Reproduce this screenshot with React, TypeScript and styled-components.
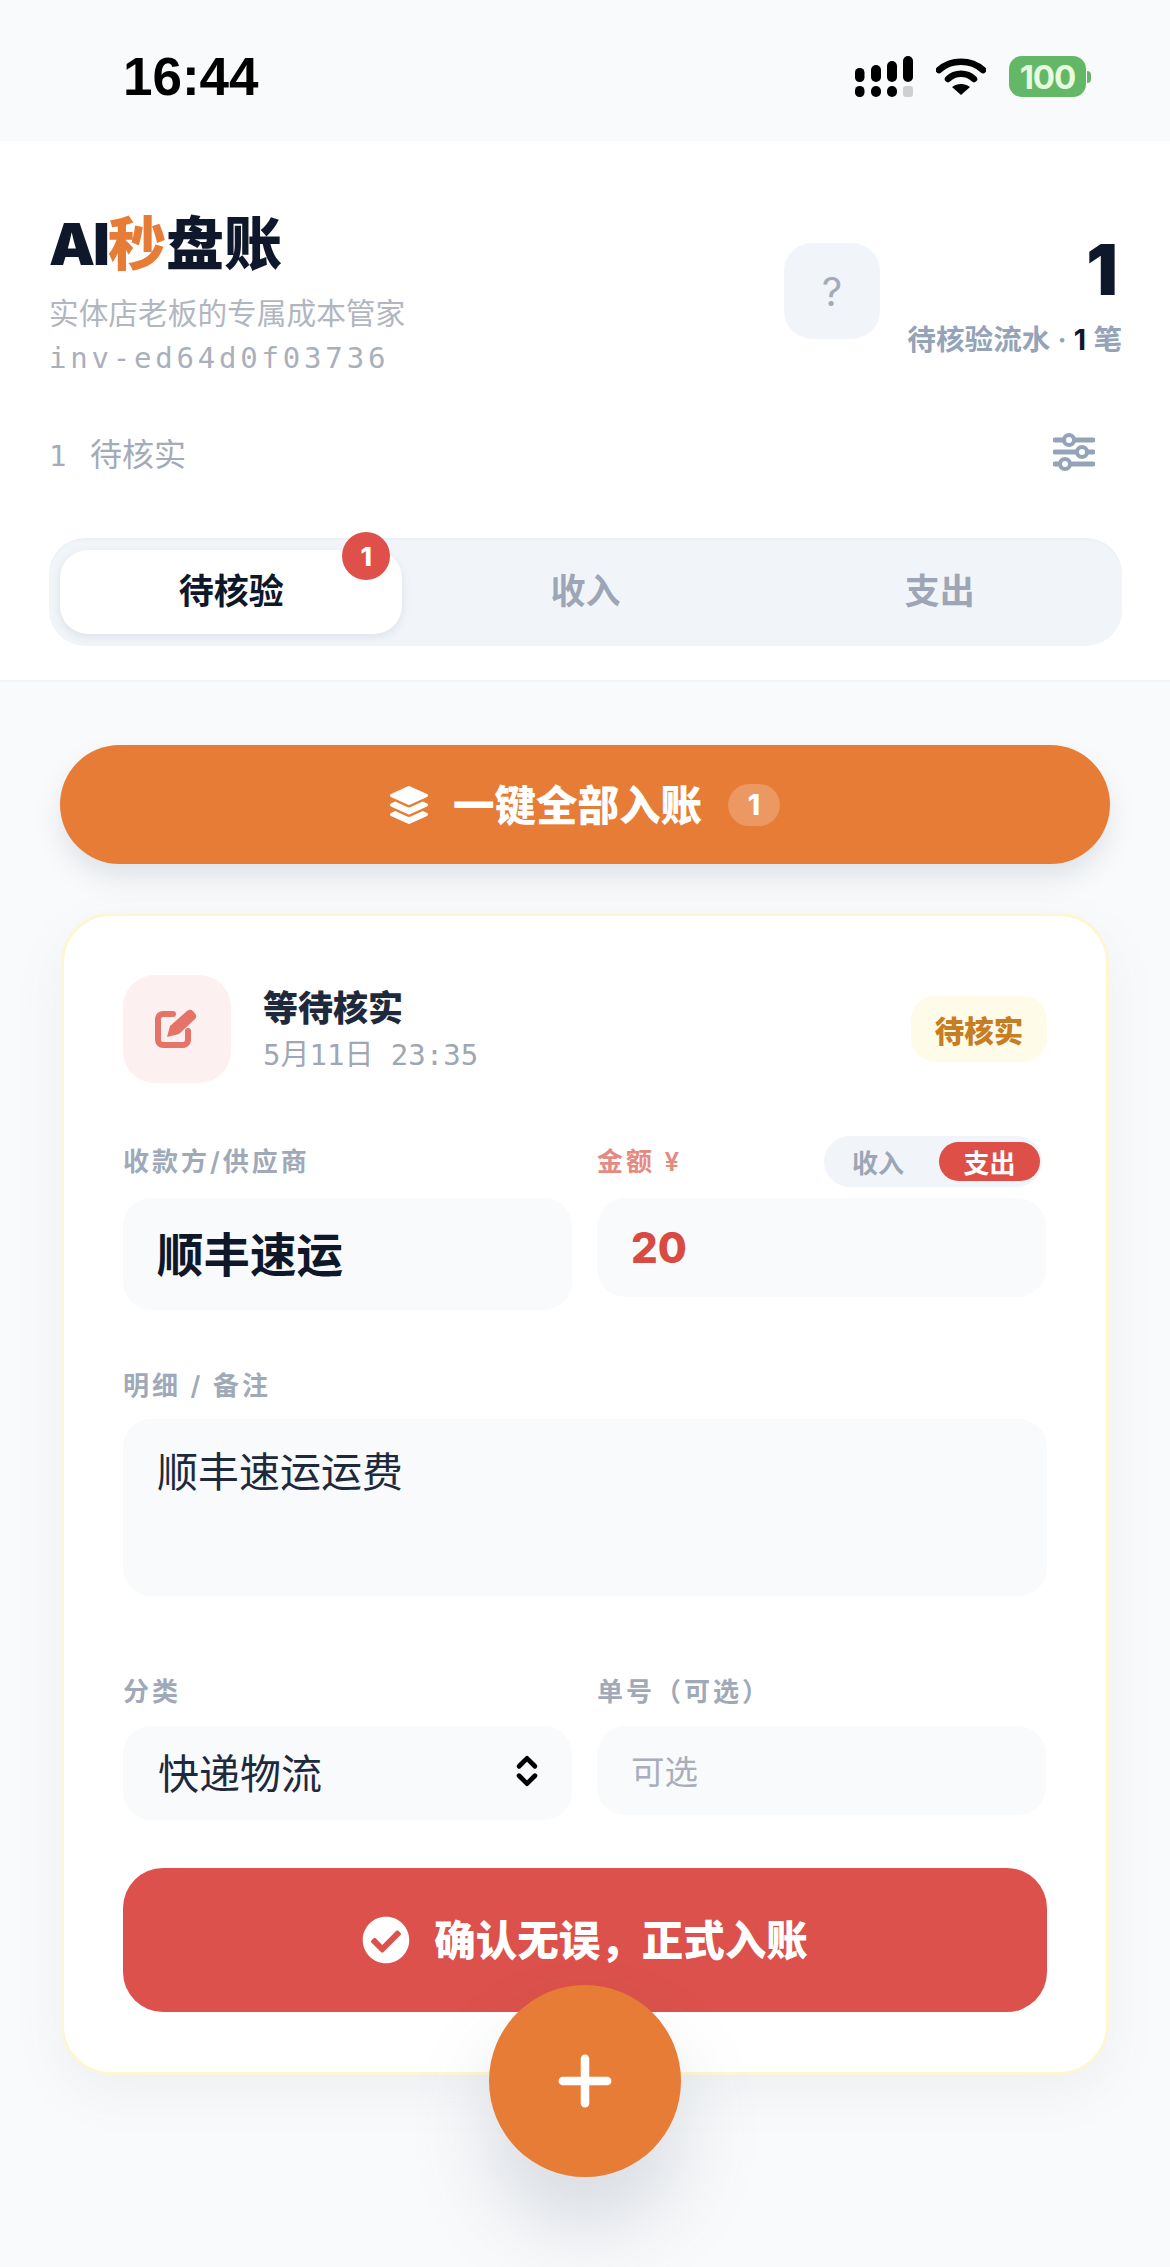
import styled, { createGlobalStyle } from "styled-components";
import { FaLayerGroup, FaCheckCircle } from "react-icons/fa";
import { ChevronsUpDown, Plus } from "lucide-react";

const cjk = `Inter, "Noto Sans CJK SC", sans-serif`;
const mono = `"DejaVu Sans Mono", "Noto Sans CJK SC", monospace`;

const GlobalStyle = createGlobalStyle`
  html, body {
    margin: 0;
    padding: 0;
    background: #f9fafb;
  }
  * {
    box-sizing: border-box;
  }
`;

const SignalIcon = () => (
  <svg width="58" height="42" viewBox="0 0 58 42">
    <g fill="#000">
      <rect x="0" y="12" width="9.5" height="14" rx="4.5" />
      <rect x="16" y="9" width="10" height="17" rx="5" />
      <rect x="32" y="5" width="10" height="21" rx="5" />
      <rect x="48" y="0" width="10" height="26" rx="5" />
      <rect x="0" y="30" width="9.5" height="11" rx="4.5" />
      <rect x="16" y="30" width="10" height="11" rx="5" />
      <rect x="32" y="30" width="10" height="11" rx="5" />
    </g>
    <rect x="48" y="30" width="10" height="11" rx="3" fill="#cfcfcf" />
  </svg>
);

const WifiIcon = () => (
  <svg width="50" height="38" viewBox="0 0 50 38">
    <path d="M3 12 C15 1 35 1 47 12" fill="none" stroke="#000" strokeWidth="6.5" strokeLinecap="round" />
    <path d="M12 21 C19 14 31 14 38 21" fill="none" stroke="#000" strokeWidth="6.5" strokeLinecap="round" />
    <path d="M25 37 L16 29 C21 25 29 25 34 29 Z" fill="#000" />
  </svg>
);

const SlidersIcon = () => (
  <svg width="42" height="40" viewBox="0 0 42 40" fill="none" stroke="#94a3b8" strokeWidth="5" strokeLinecap="round">
    <path d="M2 8 H40" />
    <path d="M2 20 H40" />
    <path d="M2 32 H40" />
    <g fill="#fff" strokeWidth="4">
      <circle cx="16" cy="8" r="5" />
      <circle cx="29" cy="20" r="5" />
      <circle cx="12" cy="32" r="5" />
    </g>
  </svg>
);

const EditIcon = () => (
  <svg width="46" height="44" viewBox="0 0 46 44">
    <path
      d="M19 7 H9 a5 5 0 0 0 -5 5 V33 a5 5 0 0 0 5 5 H29 a5 5 0 0 0 5 -5 V24"
      fill="none"
      stroke="#e57368"
      strokeWidth="6"
      strokeLinecap="round"
    />
    <path d="M13 30 L16 19 L33 4 Q36 1.5 39 4 L41 6.5 Q43.5 9.5 41 12 L25 27 Z" fill="#e57368" />
  </svg>
);

export default function App() {
  return (
    <>
      <GlobalStyle />
      <Page>
        <StatusBar>
          <Time>16:44</Time>
          <StatusIcons>
            <SignalIcon />
            <WifiIcon />
            <Battery>
              <BatteryBody>100</BatteryBody>
              <BatteryTip />
            </Battery>
          </StatusIcons>
        </StatusBar>

        <Header>
          <HeaderTop>
            <Brand>
              <Title>
                <TitleLatin>AI</TitleLatin>
                <TitleAccent>秒</TitleAccent>盘账
              </Title>
              <Subtitle>实体店老板的专属成本管家</Subtitle>
              <InvoiceId>inv-ed64d0f03736</InvoiceId>
            </Brand>
            <HelpButton>?</HelpButton>
            <Stats>
              <StatNumber>1</StatNumber>
              <StatLabel>
                待核验流水 · <strong>1</strong> 笔
              </StatLabel>
            </Stats>
          </HeaderTop>
          <FilterRow>
            <FilterText>
              <FilterCount>1</FilterCount>待核实
            </FilterText>
            <SlidersIcon />
          </FilterRow>
          <Tabs>
            <Tab $active>
              待核验
              <TabBadge>1</TabBadge>
            </Tab>
            <Tab>收入</Tab>
            <Tab>支出</Tab>
          </Tabs>
        </Header>

        <Main>
          <BulkButton>
            <FaLayerGroup size={38} />
            <BulkLabel>一键全部入账</BulkLabel>
            <BulkCount>1</BulkCount>
          </BulkButton>

          <Card>
            <CardHead>
              <IconTile>
                <EditIcon />
              </IconTile>
              <CardTitleBlock>
                <CardTitle>等待核实</CardTitle>
                <CardDate>5月11日 23:35</CardDate>
              </CardTitleBlock>
              <StatusPill>待核实</StatusPill>
            </CardHead>

            <FieldGrid>
              <Field>
                <LabelRow>
                  <FieldLabel>收款方/供应商</FieldLabel>
                </LabelRow>
                <PayeeBox>顺丰速运</PayeeBox>
              </Field>
              <Field>
                <LabelRow>
                  <FieldLabel $accent>金额 ¥</FieldLabel>
                  <TypeToggle>
                    <TypeOption>收入</TypeOption>
                    <TypeOption $active>支出</TypeOption>
                  </TypeToggle>
                </LabelRow>
                <AmountBox>20</AmountBox>
              </Field>
            </FieldGrid>

            <NoteLabel>明细 / 备注</NoteLabel>
            <NoteBox>顺丰速运运费</NoteBox>

            <LowerLabels>
              <FieldLabel>分类</FieldLabel>
              <FieldLabel>单号（可选）</FieldLabel>
            </LowerLabels>
            <FieldGrid>
              <SelectBox>
                快递物流
                <ChevronsUpDown size={38} strokeWidth={3} color="#000" />
              </SelectBox>
              <PlaceholderBox>可选</PlaceholderBox>
            </FieldGrid>

            <ConfirmButton>
              <FaCheckCircle size={48} />
              <ConfirmLabel>确认无误，正式入账</ConfirmLabel>
            </ConfirmButton>
          </Card>
        </Main>

        <Fab>
          <Plus size={76} strokeWidth={2.7} color="#fff" />
        </Fab>
      </Page>
    </>
  );
}

const Page = styled.div`
  position: relative;
  width: 1170px;
  height: 2267px;
  overflow: hidden;
  background: #f9fafb;
  font-family: ${cjk};
`;

const StatusBar = styled.div`
  display: flex;
  justify-content: space-between;
  align-items: center;
  height: 141px;
  padding: 16px 79px 4px 123px;
  background: #f9fafb;
`;

const Time = styled.div`
  font-family: "Liberation Sans", sans-serif;
  font-size: 53px;
  font-weight: 700;
  color: #000;
`;

const StatusIcons = styled.div`
  display: flex;
  align-items: center;
  gap: 23px;
`;

const Battery = styled.div`
  display: flex;
  align-items: center;
  gap: 1px;
`;

const BatteryBody = styled.div`
  display: flex;
  align-items: center;
  justify-content: center;
  width: 77px;
  height: 41px;
  border-radius: 13px;
  background: #62b866;
  color: #e6fbdf;
  font-size: 33px;
  font-weight: 700;
  letter-spacing: -1px;
`;

const BatteryTip = styled.div`
  width: 4px;
  height: 12px;
  border-radius: 0 6px 6px 0;
  background: #62b866;
`;

const Header = styled.header`
  height: 541px;
  padding: 65px 48px 0 49px;
  background: #fff;
  border-bottom: 2px solid #f1f5f9;
`;

const HeaderTop = styled.div`
  display: flex;
  align-items: flex-start;
  height: 224px;
`;

const Brand = styled.div`
  flex: 1;
`;

const Title = styled.h1`
  margin: 0;
  font-size: 58px;
  line-height: 76px;
  font-weight: 900;
  color: #0f172a;
`;

const TitleLatin = styled.span`
  letter-spacing: -2px;
`;

const TitleAccent = styled.span`
  color: #e67c36;
`;

const Subtitle = styled.div`
  margin-top: 13px;
  font-size: 29.7px;
  line-height: 36px;
  color: #b1b6c1;
`;

const InvoiceId = styled.div`
  margin-top: 9px;
  font-family: ${mono};
  font-size: 29px;
  line-height: 36px;
  letter-spacing: 3.8px;
  color: #a9afbb;
`;

const HelpButton = styled.div`
  display: flex;
  align-items: center;
  justify-content: center;
  width: 96px;
  height: 96px;
  margin-top: 37px;
  border-radius: 28px;
  background: #f1f5f9;
  color: #a3abba;
  font-size: 40px;
  font-weight: 400;
`;

const Stats = styled.div`
  display: flex;
  flex-direction: column;
  align-items: flex-end;
  width: 242px;
  margin-top: 26px;
`;

const StatNumber = styled.div`
  padding-right: 4px;
  font-size: 70px;
  line-height: 76px;
  font-weight: 900;
  color: #0f172a;
`;

const StatLabel = styled.div`
  margin-top: 14px;
  font-size: 28.6px;
  line-height: 36px;
  font-weight: 600;
  white-space: nowrap;
  color: #94a3b8;

  strong {
    color: #0f172a;
    font-weight: 700;
  }
`;

const FilterRow = styled.div`
  display: flex;
  justify-content: space-between;
  align-items: center;
  height: 44px;
  padding-right: 27px;
`;

const FilterText = styled.div`
  font-size: 32px;
  color: #a3abb9;
`;

const FilterCount = styled.span`
  display: inline-block;
  width: 41px;
  font-family: ${mono};
  font-size: 29px;
`;

const Tabs = styled.div`
  display: grid;
  grid-template-columns: repeat(3, 1fr);
  gap: 12px;
  height: 108px;
  margin-top: 64px;
  padding: 12px 11px;
  border-radius: 36px;
  background: #f1f5f9;
  box-shadow: inset 0 2px 2px rgba(148, 163, 184, 0.06);
`;

const Tab = styled.div<{ $active?: boolean }>`
  position: relative;
  display: flex;
  align-items: center;
  justify-content: center;
  padding-bottom: 8px;
  border-radius: 28px;
  font-size: 35px;
  font-weight: 700;
  color: ${(p) => (p.$active ? "#0f172a" : "#9ca6b6")};
  background: ${(p) => (p.$active ? "#fff" : "transparent")};
  box-shadow: ${(p) => (p.$active ? "0 3px 8px rgba(100, 116, 139, 0.14)" : "none")};
`;

const TabBadge = styled.span`
  position: absolute;
  top: -18px;
  right: 12px;
  display: flex;
  align-items: center;
  justify-content: center;
  width: 48px;
  height: 48px;
  border-radius: 50%;
  background: #e0504a;
  color: #fff;
  font-size: 26px;
  font-weight: 800;
`;

const Main = styled.main`
  padding: 63px 60px 0;
`;

const BulkButton = styled.div`
  display: flex;
  align-items: center;
  justify-content: center;
  height: 119px;
  border-radius: 60px;
  background: #e67c36;
  color: #fff;
  box-shadow: 0 14px 26px rgba(100, 116, 139, 0.16);
`;

const BulkLabel = styled.span`
  margin: 0 0 4px 25px;
  font-size: 41.5px;
  font-weight: 900;
`;

const BulkCount = styled.span`
  display: flex;
  align-items: center;
  justify-content: center;
  width: 52px;
  height: 42px;
  margin-left: 26px;
  border-radius: 21px;
  background: rgba(255, 255, 255, 0.22);
  font-size: 28px;
  font-weight: 800;
`;

const Card = styled.section`
  margin: 49px 1px 0;
  padding: 59px;
  height: 1162px;
  border: 3px solid #fdf6d2;
  border-radius: 50px;
  background: #fff;
  box-shadow: 0 18px 50px rgba(100, 116, 139, 0.08);
`;

const CardHead = styled.div`
  display: flex;
  align-items: center;
  height: 108px;
`;

const IconTile = styled.div`
  display: flex;
  align-items: center;
  justify-content: center;
  width: 108px;
  height: 108px;
  border-radius: 32px;
  background: #fdf0f0;
`;

const CardTitleBlock = styled.div`
  flex: 1;
  margin-left: 32px;
`;

const CardTitle = styled.div`
  font-size: 35px;
  line-height: 46px;
  font-weight: 900;
  color: #1e293b;
`;

const CardDate = styled.div`
  margin-top: 6px;
  font-family: ${mono};
  font-size: 29px;
  line-height: 36px;
  color: #a0a7b4;
`;

const StatusPill = styled.div`
  display: flex;
  align-items: center;
  justify-content: center;
  width: 136px;
  height: 66px;
  border-radius: 24px;
  background: #fefbe8;
  color: #c77d24;
  font-size: 29.5px;
  font-weight: 800;
`;

const FieldGrid = styled.div`
  display: grid;
  grid-template-columns: 449px 449px;
  gap: 25px;
  align-items: start;
`;

const Field = styled.div`
  margin-top: 53px;
`;

const LabelRow = styled.div`
  display: flex;
  justify-content: space-between;
  align-items: center;
  height: 51px;
  margin-bottom: 11px;
`;

const FieldLabel = styled.div<{ $accent?: boolean }>`
  font-size: 26px;
  line-height: 34px;
  font-weight: 600;
  letter-spacing: 3px;
  color: ${(p) => (p.$accent ? "#e58a80" : "#a0a9b8")};
`;

const TypeToggle = styled.div`
  display: flex;
  align-items: center;
  justify-content: space-between;
  width: 218px;
  height: 51px;
  margin-right: 4px;
  padding: 0 2px 0 28px;
  border-radius: 26px;
  background: #f1f5f9;
`;

const TypeOption = styled.div<{ $active?: boolean }>`
  display: flex;
  align-items: center;
  justify-content: center;
  height: 39px;
  width: ${(p) => (p.$active ? "101px" : "auto")};
  border-radius: 20px;
  font-size: 26px;
  font-weight: 700;
  color: ${(p) => (p.$active ? "#fff" : "#9ca6b6")};
  background: ${(p) => (p.$active ? "#de4f48" : "transparent")};
`;

const InputBox = styled.div`
  display: flex;
  align-items: center;
  border-radius: 28px;
  background: #f8fafb;
`;

const PayeeBox = styled(InputBox)`
  height: 112px;
  padding: 0 0 5px 34px;
  font-size: 46.5px;
  font-weight: 700;
  color: #0f172a;
`;

const AmountBox = styled(InputBox)`
  height: 99px;
  padding-left: 34px;
  font-size: 42px;
  font-weight: 800;
  color: #d94a42;
`;

const NoteLabel = styled(FieldLabel)`
  margin-top: 59px;
  margin-bottom: 16px;
`;

const NoteBox = styled(InputBox)`
  align-items: flex-start;
  height: 177px;
  padding: 26px 34px;
  font-size: 41px;
  line-height: 54px;
  color: #1e293b;
`;

const LowerLabels = styled.div`
  display: grid;
  grid-template-columns: 449px 449px;
  gap: 25px;
  margin-top: 79px;
  margin-bottom: 17px;
`;

const SelectBox = styled(InputBox)`
  justify-content: space-between;
  height: 94px;
  padding: 0 26px 4px 35px;
  font-size: 41px;
  color: #1e293b;
`;

const PlaceholderBox = styled(InputBox)`
  height: 89px;
  padding: 0 0 2px 34px;
  font-size: 33.5px;
  color: #a8afbb;
`;

const ConfirmButton = styled.div`
  display: flex;
  align-items: center;
  justify-content: center;
  gap: 24px;
  height: 144px;
  margin-top: 48px;
  border-radius: 40px;
  background: #dc514b;
  color: #fff;
`;

const ConfirmLabel = styled.span`
  margin-bottom: 4px;
  font-size: 41.5px;
  font-weight: 900;
`;

const Fab = styled.div`
  position: absolute;
  left: 489px;
  top: 1985px;
  display: flex;
  align-items: center;
  justify-content: center;
  width: 192px;
  height: 192px;
  border-radius: 50%;
  background: #e67c36;
  box-shadow: 0 50px 80px rgba(100, 116, 139, 0.22);
`;
